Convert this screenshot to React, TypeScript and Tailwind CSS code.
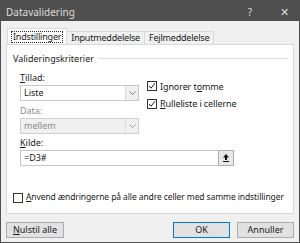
import React from "react";

const font = { fontFamily: '"Noto Sans", "Open Sans", sans-serif' };

function Chevron({ color = "#7a7a7a" }: { color?: string }) {
  return (
    <svg width="7" height="4" viewBox="0 0 7 4">
      <path d="M0.5 0.5 L3.5 3.5 L6.5 0.5" fill="none" stroke={color} strokeWidth="1" />
    </svg>
  );
}

function Check() {
  return (
    <div className="w-[10px] h-[10px] border border-[#333] bg-white flex items-center justify-center">
      <svg width="8" height="8" viewBox="0 0 8 8">
        <path d="M1 4 L3 6.2 L7 1.2" fill="none" stroke="#222" strokeWidth="1" />
      </svg>
    </div>
  );
}

export default function App() {
  return (
    <div
      className="w-[300px] h-[243px] bg-[#f0f0f0] border-x border-b border-[#4f4f4f] flex flex-col text-[9px] text-[#1a1a1a] overflow-hidden whitespace-nowrap"
      style={font}
    >
      {/* Title bar */}
      <div className="h-[21px] bg-[#4f4f4f] flex items-center pl-[5px] pr-[10px] text-[#dcdcdc] text-[10px] pt-[4px]">
        <span>Datavalidering</span>
        <span className="ml-auto mr-[28px]">?</span>
        <span className="text-[11px]">✕</span>
      </div>
      {/* Tabs */}
      <div className="flex items-end pl-[6px] mt-[7px] h-[16px] tracking-[-0.2px]">
        <div className="h-[16px] bg-white border-x border-t border-[#d9d9d9] px-[3px] flex items-center">
          <span className="border border-dotted border-[#333] px-[1px] leading-[10px]">Indstillinger</span>
        </div>
        <div className="h-[13px] border-t border-r border-[#d9d9d9] px-[4px] flex items-center">Inputmeddelelse</div>
        <div className="h-[13px] border-t border-r border-[#d9d9d9] px-[4px] flex items-center">Fejlmeddelelse</div>
      </div>
      {/* Panel */}
      <div className="mx-[5px] h-[170px] bg-white border border-[#d9d9d9] flex flex-col">
        <div className="flex items-center mt-[7px] ml-[6px] mr-[5px]">
          <span>Valideringskriterier</span>
          <div className="flex-1 h-px bg-[#dcdcdc] ml-[4px]" />
        </div>
        <div className="flex ml-[13px] mt-[6px]">
          <div className="flex flex-col w-[119px]">
            <span className="leading-[12px]"><u>T</u>illad:</span>
            <div className="mt-[1px] h-[16px] border border-[#c8c8c8] flex items-center">
              <span className="pl-[3px] flex-1">Liste</span>
              <div className="w-[13px] h-full bg-[#f0f0f0] border-l border-[#dcdcdc] flex items-center justify-center">
                <Chevron />
              </div>
            </div>
            <span className="leading-[12px] mt-[4px] text-[#8a8a8a]">Data:</span>
            <div className="mt-[1px] h-[16px] border border-[#cfcfcf] bg-[#f0f0f0] flex items-center text-[#8a8a8a]">
              <span className="pl-[3px] flex-1">mellem</span>
              <div className="w-[13px] h-full border-l border-[#dcdcdc] flex items-center justify-center">
                <Chevron color="#9a9a9a" />
              </div>
            </div>
          </div>
          <div className="flex flex-col ml-[8px] mt-[8px] gap-[4px] tracking-[-0.1px]">
            <div className="flex items-center gap-[3px]">
              <Check />
              <span>Ignorer t<u>o</u>mme</span>
            </div>
            <div className="flex items-center gap-[3px]">
              <Check />
              <span><u>R</u>ulleliste i cellerne</span>
            </div>
          </div>
        </div>
        <div className="ml-[13px] mt-[3px] flex flex-col">
          <span className="leading-[12px]"><u>K</u>ilde:</span>
          <div className="mt-[1px] w-[214px] h-[16px] border border-[#c8c8c8] flex items-center">
            <span className="pl-[3px] flex-1">=D3#</span>
            <div className="w-[16px] h-[16px] -mr-px border border-[#b0b0b0] bg-[#e8e8e8] flex items-center justify-center">
              <svg width="8" height="9" viewBox="0 0 8 9">
                <path d="M4 1 L7 4.5 H5 V7 H3 V4.5 H1 Z" fill="#111" />
                <rect x="1" y="8" width="6" height="1" fill="#111" />
              </svg>
            </div>
          </div>
        </div>
        <div className="flex items-center mt-auto mb-[9px] ml-[6px] gap-[3px]">
          <div className="w-[10px] h-[10px] border border-[#333] bg-white" />
          <span className="text-[8.5px] tracking-[-0.1px]"><u>A</u>nvend ændringerne på alle andre celler med samme indstillinger</span>
        </div>
      </div>
      {/* Buttons */}
      <div className="flex mx-[5px] mt-[8px]">
        <div className="w-[58px] h-[16px] bg-[#e1e1e1] border border-[#adadad] flex items-center justify-center">
          <span><u>N</u>ulstil alle</span>
        </div>
        <div className="ml-auto w-[57px] h-[16px] bg-[#e1e1e1] border border-[#0078d7] flex items-center justify-center">OK</div>
        <div className="ml-[7px] w-[57px] h-[16px] bg-[#e1e1e1] border border-[#adadad] flex items-center justify-center">Annuller</div>
      </div>
    </div>
  );
}
